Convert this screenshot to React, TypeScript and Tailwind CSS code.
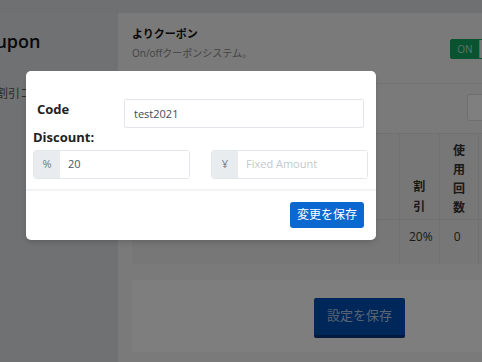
import { useState } from 'react';

const FONT = { fontFamily: '"Open Sans", "Noto Sans CJK JP", sans-serif' };

function Toggle() {
  return (
    <div className="flex h-[20px] w-[45px] items-stretch rounded-[2px] border border-[#11a660] bg-[#11a660]">
      <span className="flex w-[28px] items-center justify-center text-[10px] text-white/70">ON</span>
      <span className="flex-1 border-l border-[#c8c8c8] bg-[#eeeeee]" />
    </div>
  );
}

function InputGroup({ addon, value, placeholder }: { addon: string; value?: string; placeholder?: string }) {
  return (
    <div className="flex h-[29px] w-[157px] rounded-[3px] border border-[#e3e6ea]">
      <span className="flex w-[26px] items-center justify-center rounded-l-[3px] bg-[#e9ecef] text-[11px] text-[#707a86]">
        {addon}
      </span>
      <input
        defaultValue={value}
        placeholder={placeholder}
        className="min-w-0 flex-1 bg-white px-[8px] text-[11px] text-[#4a5664] outline-none placeholder:text-[#c4c8cd]"
      />
    </div>
  );
}

function CouponModal() {
  const [code, setCode] = useState('test2021');

  return (
    <div className="absolute left-[26px] top-[71px] w-[350px] rounded-[5px] bg-white shadow-md">
      <div className="px-[7px] pt-[28px] pb-[10px]">
        <div className="flex items-start">
          <label className="w-[91px] pl-[4px] pt-[1px] text-[13px] font-bold leading-[18px] text-[#222]">Code</label>
          <input
            value={code}
            onChange={(e) => setCode(e.target.value)}
            className="h-[29px] w-[240px] rounded-[2px] border border-[#e3e6ea] px-[9px] text-[11px] text-[#3d4b5c] outline-none"
          />
        </div>
        <div className="text-[13px] font-bold leading-[18px] text-[#222]">Discount:</div>
        <div className="mt-[4px] flex gap-[21px]">
          <InputGroup addon="%" value="20" />
          <InputGroup addon="¥" placeholder="Fixed Amount" />
        </div>
      </div>
      <div className="h-[2px] bg-[#f2f3f4]" />
      <div className="flex justify-end px-[12px] pt-[11px] pb-[12px]">
        <button
          type="button"
          className="h-[26px] w-[74px] rounded-[3px] bg-[#0b68d0] text-[12px] text-white"
        >
          変更を保存
        </button>
      </div>
    </div>
  );
}

export default function App() {
  return (
    <div style={FONT} className="relative h-[362px] w-full overflow-hidden bg-[#dee0e2]">
      <div className="flex h-full pt-[13px]">
        {/* Sidebar */}
        <aside className="w-[118px] shrink-0 overflow-hidden bg-[#e0e2e4]">
          <h1 className="-ml-[27px] mt-[15px] whitespace-nowrap text-[18px] font-semibold text-[#111]">Coupon</h1>
          <p className="-ml-[4px] mt-[30px] whitespace-nowrap text-[12px] text-[#555]">割引コード</p>
        </aside>

        {/* Main panel */}
        <main className="w-[470px] shrink-0 bg-[#f4f4f4] px-[14px]">
          <div className="flex h-[71px] items-start gap-[212px] border-b border-[#e4e4e4] pt-[12px]">
            <div className="w-[106px] shrink-0">
              <div className="text-[11px] font-bold leading-[18px] text-[#111]">よりクーポン</div>
              <div className="mt-[2px] whitespace-nowrap text-[10px] leading-[16px] text-[#888]">On/offクーポンシステム。</div>
            </div>
            <div className="mt-[14px] shrink-0">
              <Toggle />
            </div>
          </div>

          <div className="flex h-[49px] pt-[10px] pl-[335px]">
            <div className="h-[27px] w-[60px] rounded-[3px] border border-[#ddd] bg-white" />
          </div>

          <table className="table-fixed border-collapse bg-[#eeeeee] text-[12px] text-[#333]">
            <thead>
              <tr className="border-t border-b border-[#e2e2e2]">
                <th className="h-[85px] w-[281px]" />
                <th className="w-[40px] border-l border-[#e2e2e2] px-[10px] pb-[2px] align-bottom font-bold leading-[20px]">割引</th>
                <th className="w-[40px] border-l border-[#e2e2e2] px-[10px] pt-[7px] pb-[2px] align-bottom font-bold leading-[19px]">使用回数</th>
                <th className="w-[100px] border-l border-[#e2e2e2]" />
              </tr>
            </thead>
            <tbody>
              <tr>
                <td className="h-[44px]" />
                <td className="border-l border-[#e2e2e2] pl-[9px] pb-[9px]">20%</td>
                <td className="border-l border-[#e2e2e2] pl-[14px] pb-[9px]">0</td>
                <td className="border-l border-[#e2e2e2]" />
              </tr>
            </tbody>
          </table>

          <div className="mt-[16px] flex h-[72px] w-[455px] items-start justify-center bg-[#fafcfa] pt-[18px]">
            <button
              type="button"
              className="h-[40px] w-[91px] rounded-[2px] border-b-[3px] border-[#00337f] bg-[#004eb4] text-[13px] text-white/70"
            >
              設定を保存
            </button>
          </div>
        </main>
      </div>

      {/* Backdrop */}
      <div className="absolute inset-0 bg-black/50" />

      <CouponModal />
    </div>
  );
}
